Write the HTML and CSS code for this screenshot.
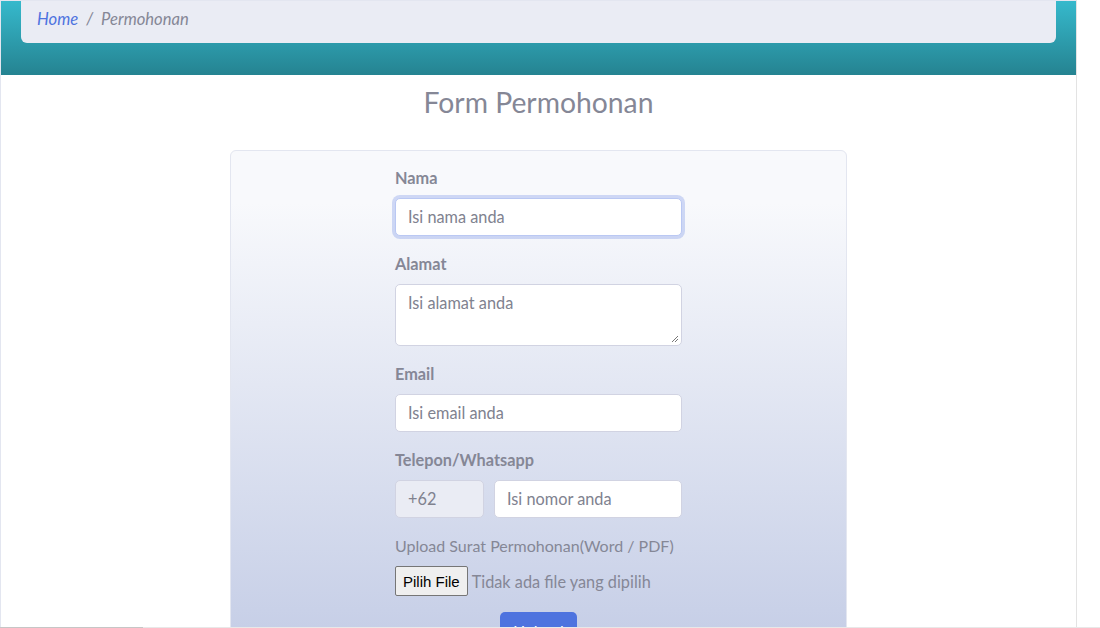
FILE: index.html
```html
<!DOCTYPE html>
<html lang="id">
<head>
<meta charset="utf-8">
<title>Form Permohonan</title>
<link rel="stylesheet" href="styles.css">
</head>
<body>
<div class="screen">
  <div class="page">
    <header class="topbar">
      <nav class="breadcrumb">
        <a class="crumb-link" href="#">Home</a>
        <span class="crumb-sep">/</span>
        <span class="crumb-active">Permohonan</span>
      </nav>
    </header>
    <main class="content">
      <h3 class="title">Form Permohonan</h3>
      <div class="card">
        <form class="form">
          <div class="group">
            <label class="label">Nama</label>
            <div class="control focus">Isi nama anda</div>
          </div>
          <div class="group">
            <label class="label">Alamat</label>
            <div class="control textarea">Isi alamat anda
              <svg class="grip" width="8" height="8" viewBox="0 0 8 8"><path d="M7 1L1 7M7 4L4 7" stroke="#777" stroke-width="1"/></svg>
            </div>
          </div>
          <div class="group">
            <label class="label">Email</label>
            <div class="control">Isi email anda</div>
          </div>
          <div class="group">
            <label class="label">Telepon/Whatsapp</label>
            <div class="phone-row">
              <div class="control prefix">+62</div>
              <div class="control number">Isi nomor anda</div>
            </div>
          </div>
          <div class="group">
            <label class="label plain">Upload Surat Permohonan(Word / PDF)</label>
            <div class="file">
              <span class="file-btn">Pilih File</span>
              <span class="file-text">Tidak ada file yang dipilih</span>
            </div>
          </div>
          <div class="actions">
            <span class="submit">Upload</span>
          </div>
        </form>
      </div>
    </main>
  </div>
  <div class="side"></div>
</div>
<div class="hscroll"><span class="thumb"></span></div>
</body>
</html>
```
FILE: styles.css
```css
* { box-sizing: border-box; }
html, body { margin: 0; padding: 0; }
body {
  width: 1100px;
  height: 628px;
  overflow: hidden;
  background: #fff;
  font-family: Lato, "Open Sans", sans-serif;
  color: #858796;
}
.screen {
  display: flex;
  height: 627px;
}
.page {
  width: 1076px;
  border-top: 1px solid #e3e6f0;
  border-left: 1px solid #e3e6f0;
  overflow: hidden;
  display: flex;
  flex-direction: column;
}
.side {
  flex: 1;
  border-left: 1px solid #e3e3e3;
}
.hscroll {
  height: 1px;
  background: #e8e8e8;
  display: flex;
}
.thumb {
  width: 143px;
  background: #c6c6c6;
}
.topbar {
  height: 74px;
  flex: none;
  padding: 0 20px;
  background-color: #36b9cc;
  background-image: linear-gradient(180deg, #36b9cc 0%, #258391 100%);
}
.breadcrumb {
  height: 42px;
  background: #eaecf4;
  border-radius: 0 0 6px 6px;
  padding: 6px 16px 0;
  font-size: 16.6px;
  line-height: 24px;
  font-style: italic;
  display: flex;
  gap: 8px;
}
.crumb-link { color: #4e73df; text-decoration: none; }
.crumb-sep { color: #858796; }
.crumb-active { color: #858796; }
.content {
  flex: 1;
  padding-top: 10px;
  display: flex;
  flex-direction: column;
  align-items: center;
}
.title {
  margin: 0 0 31px;
  font-size: 28.3px;
  line-height: 34px;
  font-weight: 400;
  color: #858796;
}
.card {
  width: 617px;
  border: 1px solid #e3e6f0;
  border-radius: 6px;
  padding: 15px 0 20px;
  background-color: #f8f9fc;
  background-image: linear-gradient(180deg, #f8f9fc 10%, #c2cbe5 100%);
  display: flex;
  justify-content: center;
}
.form {
  width: 287px;
  display: flex;
  flex-direction: column;
}
.group {
  display: flex;
  flex-direction: column;
  margin-bottom: 16px;
}
.label {
  font-size: 16.3px;
  line-height: 24px;
  font-weight: 700;
  color: #858796;
  margin-bottom: 8px;
}
.label.plain { font-weight: 400; font-size: 16px; }
.control {
  position: relative;
  height: 38px;
  padding: 6px 12px;
  font-size: 16.3px;
  line-height: 24px;
  color: #80828f;
  background: #fff;
  border: 1px solid #d1d3e2;
  border-radius: 5px;
}
.control.focus {
  border-color: #bac8f3;
  box-shadow: 0 0 0 3px rgba(78, 115, 223, 0.25);
}
.control.textarea { height: 62px; }
.grip { position: absolute; right: 2px; bottom: 2px; }
.phone-row {
  display: flex;
  gap: 10px;
}
.prefix {
  width: 89px;
  background: #eaecf4;
}
.number { flex: 1; }
.file {
  display: flex;
  align-items: center;
  gap: 4px;
  height: 30px;
  font-size: 16.3px;
  color: #858796;
}
.file-btn {
  height: 30px;
  padding: 0 7px;
  display: flex;
  align-items: center;
  border: 1px solid #767676;
  border-radius: 2px;
  background: #efefef;
  color: #000;
  font-family: Arial, "Liberation Sans", sans-serif;
  font-size: 15px;
}
.actions {
  display: flex;
  justify-content: center;
}
.submit {
  width: 77px;
  height: 38px;
  border-radius: 5px;
  background: #4e73df;
  color: #fff;
  font-size: 16px;
  line-height: 38px;
  text-align: center;
}
```
